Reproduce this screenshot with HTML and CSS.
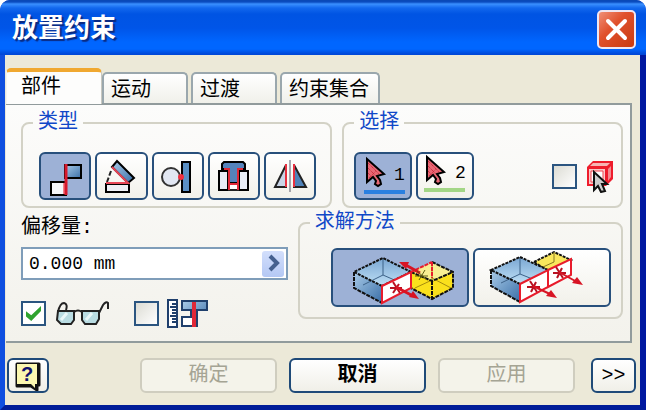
FILE: index.html
```html
<!DOCTYPE html>
<html lang="zh-CN">

<head>
    <meta charset="UTF-8">
    <meta name="viewport" content="width=device-width, initial-scale=1.0">
    <title>放置约束</title>
    <link rel="stylesheet" href="styles.css">
</head>

<body>
    <div class="window">
        <div class="titlebar">
            <h1>放置约束</h1>
            <button class="close" type="button" aria-label="关闭">
                <svg width="35" height="35" viewBox="0 0 35 35">
                    <path d="M9 9L26 26M26 9L9 26" stroke="#fff" stroke-width="4" stroke-linecap="round" />
                </svg>
            </button>
        </div>

        <div class="client">
            <div class="tabs" role="tablist">
                <button class="tab active" type="button" role="tab" aria-selected="true">部件</button>
                <button class="tab" type="button" role="tab">运动</button>
                <button class="tab" type="button" role="tab">过渡</button>
                <button class="tab tab-wide" type="button" role="tab">约束集合</button>
            </div>

            <div class="panel">
                <div class="row">
                    <fieldset class="group group-type">
                        <legend>类型</legend>
                        <div class="tools">
                            <button class="tool pressed" type="button" aria-label="配合">
                                <svg width="48" height="44" viewBox="0 0 48 44">
                                    <rect x="10" y="28" width="15" height="13" fill="#f4f6fa" stroke="#000" stroke-width="2" />
                                    <rect x="24" y="11" width="16" height="13" fill="url(#blue)" stroke="#000" stroke-width="2" />
                                    <path d="M22 29h3v11h-3z" fill="#f0808a" />
                                    <path d="M25 10V41" stroke="#d8182c" stroke-width="3" />
                                </svg>
                            </button>
                            <button class="tool" type="button" aria-label="角度">
                                <svg width="48" height="44" viewBox="0 0 48 44">
                                    <path d="M20 7L37 24L31 29L15 13z" fill="url(#blue)" stroke="#000" stroke-width="2" />
                                    <path d="M9 30h23v8H9z" fill="#eef0f5" stroke="#000" stroke-width="2" />
                                    <path d="M14 17L10 28" stroke="#222" stroke-width="2" stroke-dasharray="5 2" />
                                    <path d="M15 13L31 29H9" fill="none" stroke="#e84858" stroke-width="2" />
                                </svg>
                            </button>
                            <button class="tool" type="button" aria-label="相切">
                                <svg width="48" height="44" viewBox="0 0 48 44">
                                    <circle cx="17" cy="23" r="9" fill="#e2e7f2" stroke="#333" stroke-width="2" />
                                    <rect x="28" y="8" width="8" height="30" fill="#5a8fc4" stroke="#000" stroke-width="2" />
                                    <circle cx="27" cy="23" r="3" fill="#f03040" />
                                </svg>
                            </button>
                            <button class="tool" type="button" aria-label="插入">
                                <svg width="48" height="44" viewBox="0 0 48 44">
                                    <path d="M14 8H33L35 10V15H29V29H18V15H12V10z" fill="#5583bb" stroke="#000" stroke-width="2" />
                                    <path d="M9 17h9v19H9zM29 17h9v19h-9z" fill="#e8edf6" stroke="#000" stroke-width="2" />
                                    <path d="M19 30h9v6h-9z" fill="#fff" />
                                    <path d="M18 36h11" stroke="#222" stroke-width="2" />
                                    <path d="M14 15H19V36M33 15H28V36M19 30H28" fill="none" stroke="#e02838" stroke-width="2" />
                                </svg>
                            </button>
                            <button class="tool" type="button" aria-label="对称">
                                <svg width="48" height="44" viewBox="0 0 48 44">
                                    <path d="M20 11L9 33H20z" fill="#c9d4e6" stroke="#222" stroke-width="2" />
                                    <path d="M28 11L40 33H28z" fill="#4f82b8" stroke="#222" stroke-width="2" />
                                    <path d="M20 10V33M28 10V33" stroke="#e83040" stroke-width="2" />
                                    <path d="M24 6V38" stroke="#556" stroke-width="1" />
                                </svg>
                            </button>
                        </div>
                    </fieldset>

                    <fieldset class="group group-select">
                        <legend>选择</legend>
                        <div class="picks">
                            <button class="pick pressed" type="button">
                                <svg width="54" height="44" viewBox="0 0 54 44">
                                    <g id="arrow">
                                        <path d="M11 5V28L17 23L20 27L19 30L22 32L25 30L24 26L21 22L28 20z" fill="#e86874" stroke="#000" stroke-width="2" />
                                        <path d="M12 9L23 20M12 14L19 21M12 19L16 23M13 24L20 17" stroke="#c01c30" stroke-width="1" stroke-dasharray="1 1" />
                                    </g>
                                    <path d="M8 38H49" stroke="#2a80e0" stroke-width="4" />
                                    <text class="pick-no" x="38" y="26">1</text>
                                </svg>
                            </button>
                            <button class="pick" type="button">
                                <svg width="54" height="44" viewBox="0 0 54 44">
                                    <use href="#arrow" x="-2" y="-2" />
                                    <path d="M6 36H47" stroke="#a3d686" stroke-width="4" />
                                    <text class="pick-no" x="37" y="24">2</text>
                                </svg>
                            </button>
                            <label class="check check-part">
                                <input type="checkbox" aria-label="先拾取零件">
                                <svg width="30" height="33" viewBox="0 0 30 33">
                                    <path d="M2 7L8 1H28V19L21 26H2z" fill="#ee1c2c" />
                                    <path d="M8 3H25L22 6H5z" fill="#f7b4b4" />
                                    <path d="M23 9L26 6V17L23 21z" fill="#f28a90" />
                                    <path d="M4 9H20V24H4z" fill="#f9c8c8" />
                                    <path d="M6 11H18V22H6z" fill="#fff" stroke="#ee4450" />
                                    <path d="M9 12V30L13 26L16 32L20 31L17 24H22z" fill="#ccc" stroke="#111" stroke-width="2" />
                                </svg>
                            </label>
                        </div>
                    </fieldset>
                </div>

                <div class="row">
                    <div class="offset">
                        <label class="offset-label" for="offset">偏移量:</label>
                        <div class="field">
                            <input id="offset" type="text" value="0.000 mm">
                            <button class="flyout" type="button" aria-label="更多">
                                <svg width="22" height="26" viewBox="0 0 22 26">
                                    <path d="M8 5L15 12L8 19" fill="none" stroke="#45608f" stroke-width="4" />
                                </svg>
                            </button>
                        </div>
                        <div class="options">
                            <label class="check">
                                <input type="checkbox" aria-label="显示预览" checked>
                                <svg width="56" height="26" viewBox="0 0 56 26">
                                    <path d="M4 10H20V19L17 23H7L3 19z" fill="#b9dce2" stroke="#222" stroke-width="2" />
                                    <path d="M28 10H45V18L42 23H31L28 19z" fill="#b9dce2" stroke="#222" stroke-width="2" />
                                    <path d="M7 19L13 12M32 19L38 12" stroke="#e9f7f9" stroke-width="3" />
                                    <path d="M20 11Q24 8 28 11M4 11Q6 2 10 2Q14 3 12 9M45 12L49 4Q52 0 54 2V8" fill="none" stroke="#222" stroke-width="2" />
                                </svg>
                            </label>
                            <label class="check">
                                <input type="checkbox" aria-label="预计偏移量和方向">
                                <svg width="42" height="29" viewBox="2 0 42 29">
                                    <path d="M3 1H12V28H3z" fill="#fff" stroke="#1f3f6c" stroke-width="2" />
                                    <path d="M7 5H11M5 8H11M7 11H11M7 14H11M5 17H11M7 20H11M7 23H11" stroke="#1f3f6c" stroke-width="2" />
                                    <path d="M17 2H42V11H32V27H26V11H17z" fill="url(#blue)" stroke="#1f3f6c" stroke-width="2" />
                                    <path d="M17 18H28V27H17z" fill="#fff" stroke="#1f3f6c" stroke-width="2" />
                                    <path d="M29 3V28" stroke="#e02838" stroke-width="4" />
                                </svg>
                            </label>
                        </div>
                    </div>

                    <fieldset class="group group-solution">
                        <legend>求解方法</legend>
                        <div class="solutions">
                            <button class="solution pressed" type="button" aria-label="配合">
                                <svg width="133" height="55" viewBox="0 0 133 55">
                                    <path d="M21 22L50 8L78 22L49 36z" fill="url(#glass)" />
                                    <path d="M21 22L49 36V53L21 38z" fill="url(#blue)" />
                                    <path d="M50 8V25L30 35M50 25L66 32" fill="none" stroke="#3d6288" stroke-width="1" />
                                    <path d="M49 36L21 22L50 8L78 22z" fill="none" stroke="#111" stroke-width="2" stroke-dasharray="3 1" />
                                    <path d="M21 22V38L49 53" fill="none" stroke="#111" stroke-width="2" stroke-dasharray="4 1" />
                                    <path d="M78 22L99 12L120 22L99 31z" fill="#f8ef92" />
                                    <path d="M78 22L99 31V49L78 38zM99 31L120 22V38L99 49z" fill="#fae11c" />
                                    <path d="M99 14V30L82 38M99 28L118 38" fill="none" stroke="#a58d10" stroke-width="1" />
                                    <path d="M99 12L120 22V38L99 49L78 38M78 22L99 31L120 22M99 31V49" fill="none" stroke="#111" stroke-width="2" stroke-dasharray="4 1" />
                                    <path d="M99 12V28M78 22L99 12" stroke="#e81c2c" stroke-width="2" stroke-dasharray="4 1" />
                                    <path d="M49 36L78 22V38L49 53z" fill="#fff" stroke="#e81c2c" stroke-width="2" />
                                    <path d="M57 38H69M60 32L67 43M66 34L60 43" stroke="#b81222" stroke-width="2" />
                                    <path d="M63 37L80 46M87 23L71 14" stroke="#d81424" stroke-width="3" />
                                    <path d="M86 49L76 47L80 41zM66 12L76 12L73 19z" fill="#d81424" />
                                    <path d="M82 26H95M84 21L94 30M92 20L86 30" stroke="#5f5c12" stroke-width="1" />
                                </svg>
                            </button>
                            <button class="solution" type="button" aria-label="表面齐平">
                                <svg width="133" height="55" viewBox="0 0 133 55">
                                    <path d="M59 12L79 2L96 10L73 21z" fill="#f9e75c" stroke="#111" stroke-width="2" stroke-dasharray="3 1" />
                                    <path d="M79 2V12L68 17" fill="none" stroke="#8a7a20" stroke-width="1" />
                                    <path d="M16 20L45 7L73 20L45 34z" fill="url(#glass)" />
                                    <path d="M16 20L45 34V52L16 36z" fill="url(#blue)" />
                                    <path d="M45 7V24L26 33M45 24L60 30" fill="none" stroke="#3d6288" stroke-width="1" />
                                    <path d="M45 34L16 20L45 7L73 20" fill="none" stroke="#111" stroke-width="2" stroke-dasharray="3 1" />
                                    <path d="M16 20V36L45 52" fill="none" stroke="#111" stroke-width="2" stroke-dasharray="4 1" />
                                    <path d="M45 34L73 20V37L45 52zM73 20L96 9V25L73 37z" fill="#fff" stroke="#e81c2c" stroke-width="2" />
                                    <path d="M52 37H65M55 31L62 42M61 32L56 42M78 23H91M81 17L88 28M87 18L82 28" stroke="#b81222" stroke-width="2" />
                                    <path d="M58 36L77 45M84 22L102 32" stroke="#d81424" stroke-width="2" />
                                    <path d="M82 48L71 46L76 40zM108 35L97 33L102 27z" fill="#d81424" />
                                </svg>
                            </button>
                        </div>
                    </fieldset>
                </div>
            </div>

            <div class="footer">
                <button class="btn btn-help" type="button" aria-label="帮助">
                    <svg width="30" height="30" viewBox="0 0 30 30">
                        <path d="M4 3H26V24H24V29L18 25H4z" fill="#111" stroke="#111" stroke-width="3" stroke-linejoin="round" />
                        <path d="M4 3H24V23H22V27L18 23H4z" fill="#fbf7b0" />
                        <text class="help-mark" x="8" y="20">?</text>
                    </svg>
                </button>
                <button class="btn btn-ok" type="button" disabled>确定</button>
                <button class="btn btn-cancel" type="button">取消</button>
                <button class="btn" type="button" disabled>应用</button>
                <button class="btn btn-more" type="button">&gt;&gt;</button>
            </div>
        </div>
    </div>

    <!-- shared gradients -->
    <svg class="defs" width="0" height="0" aria-hidden="true">
        <defs>
            <linearGradient id="blue" x1="0" y1="0" x2="1" y2="1">
                <stop offset="0" stop-color="#a9cbe8" />
                <stop offset="1" stop-color="#3a6fa8" />
            </linearGradient>
            <linearGradient id="glass" x1="0" y1="0" x2="0" y2="1">
                <stop offset="0" stop-color="#79a6d2" />
                <stop offset="1" stop-color="#bfe0f6" />
            </linearGradient>
        </defs>
    </svg>
</body>

</html>
```
FILE: styles.css
```css
* {
    box-sizing: border-box;
    padding: 0;
    margin: 0;
}

body {
    background-color: #fff;
    font-family: "Liberation Mono", "Noto Sans CJK SC", monospace;
    font-size: 20px;
    line-height: 20px;
    color: #000;
}

button,
input {
    font: inherit;
    color: inherit;
}

svg {
    display: block;
    flex: none;
}

.defs {
    position: absolute;
}

.window {
    overflow: hidden;
    border-radius: 10px 10px 0 0;
    background-color: #0a3fd0;
}

/* title bar */
.titlebar {
    display: flex;
    align-items: center;
    justify-content: space-between;
    height: 55px;
    padding: 4px 10px 0 12px;
    background: linear-gradient(#0a48b4 0, #0a4cc0 2px, #3a90ff 4px, #1268ee 8px, #0054e3 14px, #0055e8 28px, #0066ff 42px, #0066ff 49px, #0048d8 54px);
}

.titlebar h1 {
    font-size: 26px;
    line-height: 32px;
    font-weight: bold;
    color: #fff;
    text-shadow: 2px 2px 1px #0a2a80;
}

.close {
    width: 39px;
    height: 39px;
    border: 2px solid #f0e6f0;
    border-radius: 5px;
    background: linear-gradient(135deg, #f09078, #e0512c 40%, #c83a10);
}

.client {
    border-style: solid;
    border-width: 0 6px 5px 5px;
    border-color: #0a3fd0 #0018a0 #001c98 #0f4fe0;
    padding: 13px 4px 12px 1px;
    background-color: #ece9d8;
}

/* tabs */
.tabs {
    display: flex;
    align-items: flex-end;
    margin-bottom: -1px;
}

.tab {
    width: 86px;
    height: 31px;
    margin: 0 3px 1px 0;
    padding: 4px 0 0 7px;
    border: 2px solid #9aa7ad;
    border-bottom: none;
    border-radius: 5px 5px 0 0;
    background: linear-gradient(#fff, #f0f0ea);
    text-align: left;
}

.tab-wide {
    width: 100px;
}

.tab.active {
    position: relative;
    width: 96px;
    height: 36px;
    margin: 0;
    padding: 0 0 0 14px;
    border-width: 4px 1px 0;
    border-color: #f0a830 #c8c8c0 #fff #f4f4f0;
    background: #fdfdfc;
}

/* panel */
.panel {
    display: flex;
    flex-direction: column;
    gap: 5px;
    margin-right: 4px;
    padding: 8px 7px 13px 15px;
    border: solid #919b9c;
    border-width: 2px 2px 2px 0;
    background: linear-gradient(#fcfcfb, #f3f2ec);
}

.row {
    display: flex;
    align-items: flex-start;
    gap: 10px;
}

.group {
    min-width: 0;
    border: 2px solid #d3d2c6;
    border-radius: 8px;
}

.group legend {
    margin-left: 10px;
    padding: 0 5px;
    color: #1048c8;
}

.group-type {
    flex: 312;
}

.group-select {
    flex: 281;
}

.group-solution {
    flex: 323;
}

.tools,
.picks,
.solutions {
    display: flex;
    gap: 4px;
}

.tools {
    padding: 19px 14px 6px 16px;
}

.picks {
    padding: 19px 6px 6px 10px;
}

.solutions {
    padding: 15px 10px 10px 31px;
}

.tool,
.pick,
.solution {
    display: flex;
    align-items: center;
    justify-content: center;
    border: 2px solid #28507c;
    border-radius: 6px;
    background: linear-gradient(#fff, #f2f1ea);
}

.tool {
    flex: 1;
    height: 48px;
}

.pick {
    width: 58px;
    height: 48px;
}

.solution {
    flex: 1;
    height: 59px;
}

.pressed {
    background: #9db1d6;
}

.pick-no {
    font-size: 18px;
}

/* check boxes */
.check {
    display: flex;
    align-items: center;
    gap: 8px;
}

.check-part {
    margin-left: auto;
}

.check input {
    display: flex;
    align-items: center;
    justify-content: center;
    appearance: none;
    width: 25px;
    height: 25px;
    border: 2px solid #2b5580;
    background: linear-gradient(135deg, #dcdcd4, #fff);
}

.check input:checked {
    background: #fff;
}

.check input:checked::before {
    content: "";
    width: 15px;
    height: 15px;
    background-color: #2fa32f;
    clip-path: polygon(0 35%, 35% 62%, 100% 0, 100% 34%, 35% 100%, 0 70%);
}

/* offset */
.offset {
    flex: 268;
    display: flex;
    flex-direction: column;
    padding-top: 5px;
}

.field {
    display: flex;
    align-items: center;
    height: 33px;
    margin-top: 9px;
    padding: 0 2px 0 6px;
    border: 2px solid #7f9db9;
    background-color: #fff;
}

.field input {
    flex: 1;
    min-width: 0;
    border: none;
    outline: none;
    background: none;
    font-size: 18px;
}

.flyout {
    width: 22px;
    height: 26px;
    border: none;
    border-radius: 3px;
    background: linear-gradient(#d3dffc, #b4c8f4);
}

.options {
    display: flex;
    align-items: center;
    gap: 24px;
    height: 29px;
    margin-top: 19px;
}

/* footer */
.footer {
    display: flex;
    gap: 12px;
    padding: 15px 0 0 1px;
}

.btn {
    display: flex;
    align-items: center;
    justify-content: center;
    width: 137px;
    height: 35px;
    border: 2px solid #1f4a78;
    border-radius: 6px;
    background: linear-gradient(#fff, #f0efe8);
}

.btn:disabled {
    border-color: #cfcdbf;
    background: #f4f3ea;
    color: #a5a494;
}

.btn-help {
    width: 42px;
}

.btn-ok {
    margin-left: auto;
}

.btn-cancel {
    font-weight: bold;
}

.btn-more {
    width: 45px;
    margin-left: 4px;
}

.help-mark {
    font-family: "Liberation Sans", sans-serif;
    font-size: 20px;
    font-weight: bold;
    fill: #10106c;
}
```
